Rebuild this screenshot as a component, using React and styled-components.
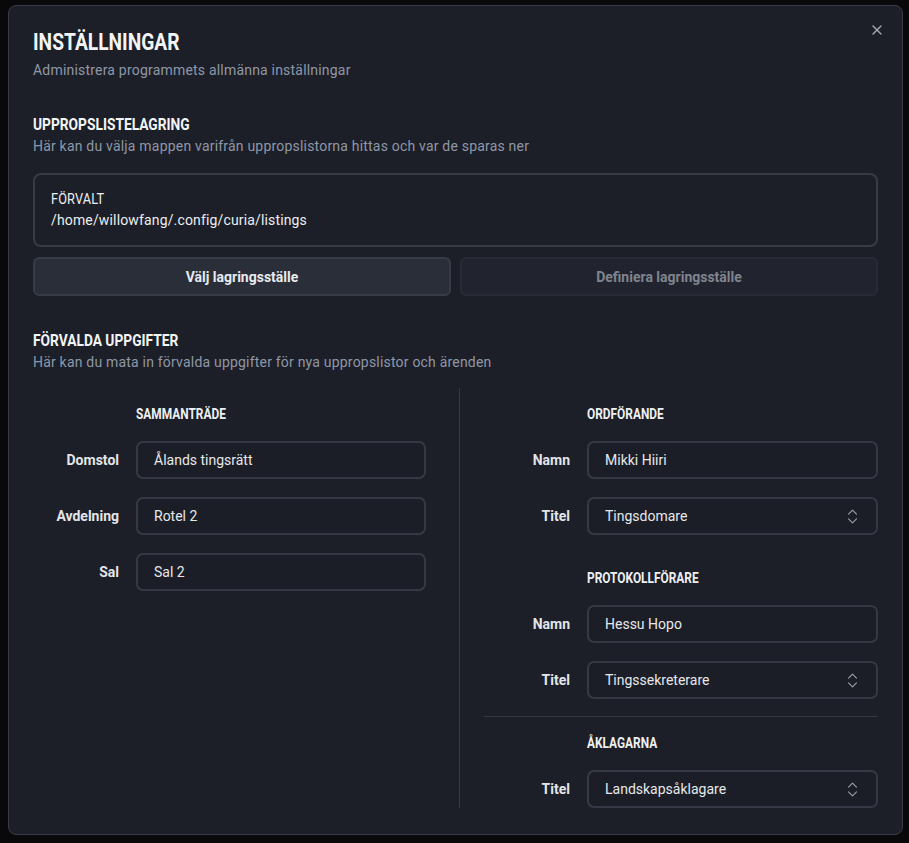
import React from "react";
import styled, { createGlobalStyle } from "styled-components";

const Global = createGlobalStyle`
  html, body {
    margin: 0;
    background: #09090b;
    height: 100%;
  }
  * { box-sizing: border-box; }
`;

const Backdrop = styled.div`
  padding: 5px 6px 8px 8px;
  font-family: Roboto, "Liberation Sans", sans-serif;
`;

const Dialog = styled.div`
  position: relative;
  background: #1c1f27;
  border: 1px solid #373c48;
  border-radius: 8px;
  padding: 20px 24px 26px 24px;
  height: 830px;
`;

const CloseBtn = styled.button`
  position: absolute;
  top: 12px;
  right: 13px;
  background: none;
  border: none;
  padding: 4px;
  color: #a3a7b1;
  display: flex;
  cursor: pointer;
`;

// narrow display face: condensed Roboto
const Narrow = styled.span`
  display: inline-block;
  transform: scaleX(${({ $k }) => $k});
  transform-origin: left center;
  white-space: nowrap;
`;

const Title = styled.h1`
  margin: 0;
  font-weight: 700;
  font-size: 24px;
  line-height: 32px;
  color: #f3f4f6;
`;

const Subtitle = styled.p`
  margin: ${({ $gap }) => $gap ?? 0}px 0 0;
  font-size: 14px;
  line-height: 20px;
  color: #8f97a8;
  letter-spacing: 0.2px;
`;

const Section = styled.section`
  margin-top: ${({ $top }) => $top}px;
`;

const SectionTitle = styled.h2`
  margin: 0;
  font-weight: 700;
  font-size: 16px;
  line-height: 22px;
  color: #f3f4f6;
`;

const PathBox = styled.div`
  margin-top: 17px;
  border: 2px solid #363b46;
  border-radius: 8px;
  padding: 14px 16px 14px;
  font-size: 14px;
  line-height: 21px;
  letter-spacing: 0.15px;
  color: #eceef2;
`;

const PathLabel = styled.div`
  font-size: 15px;
  line-height: 21px;
`;

const ButtonRow = styled.div`
  display: grid;
  grid-template-columns: 1fr 1fr;
  gap: 9px;
  margin-top: 10px;
`;

const Button = styled.button`
  height: 39px;
  border-radius: 6px;
  font-family: Roboto, "Liberation Sans", sans-serif;
  font-size: 14px;
  font-weight: 700;
  background: ${({ $disabled }) => ($disabled ? "#21242e" : "#2a2e39")};
  border: 2px solid ${({ $disabled }) => ($disabled ? "#272b35" : "#363b47")};
  color: ${({ $disabled }) => ($disabled ? "#80848f" : "#e8eaee")};
  cursor: pointer;
`;

const Columns = styled.div`
  display: grid;
  grid-template-columns: 427px 1fr;
  margin-top: 16px;
`;

const Column = styled.div`
  padding: ${({ $right }) => ($right ? "0 0 0 24px" : "0 33px 0 0")};
  border-right: ${({ $right }) => ($right ? "none" : "1px solid #333844")};
  display: flex;
  flex-direction: column;
`;

const Group = styled.div`
  display: grid;
  grid-template-columns: 86px 1fr;
  column-gap: 17px;
  row-gap: 18px;
  align-items: center;
  padding-top: ${({ $pt }) => $pt ?? 17}px;
`;

const GroupTitle = styled.div`
  grid-column: 2;
  font-weight: 700;
  font-size: 14px;
  line-height: 18px;
  color: #eef0f3;
`;

const Label = styled.label`
  text-align: right;
  font-size: 14px;
  font-weight: 700;
  color: #e3e5e9;
`;

const Field = styled.div`
  height: 38px;
  border: 2px solid #343945;
  border-radius: 7px;
  background: #1b1e26;
  display: flex;
  align-items: center;
  justify-content: space-between;
  padding: 0 14px 0 16px;
  font-size: 14px;
  color: #e6e8ec;
`;

const Divider = styled.hr`
  border: none;
  border-top: 1px solid #333844;
  margin: 17px 0 0;
`;

const Chevrons = () => (
  <svg width="19" height="19" viewBox="0 0 24 24" fill="none" stroke="#9ca0aa" strokeWidth="1.4" strokeLinecap="round" strokeLinejoin="round">
    <path d="m7 15 5 5 5-5" />
    <path d="m7 9 5-5 5 5" />
  </svg>
);

const Row = ({ label, value, select }) => (
  <>
    <Label>{label}</Label>
    <Field>
      <span>{value}</span>
      {select && <Chevrons />}
    </Field>
  </>
);

export default function App() {
  return (
    <>
      <Global />
      <Backdrop>
        <Dialog>
          <CloseBtn aria-label="Stäng">
            <svg width="16" height="16" viewBox="0 0 24 24" fill="none" stroke="currentColor" strokeWidth="2" strokeLinecap="round">
              <path d="M18 6 6 18" />
              <path d="m6 6 12 12" />
            </svg>
          </CloseBtn>

          <Title><Narrow $k={0.8}>INSTÄLLNINGAR</Narrow></Title>
          <Subtitle $gap={2}>Administrera programmets allmänna inställningar</Subtitle>

          <Section $top={34}>
            <SectionTitle><Narrow $k={0.86}>UPPROPSLISTELAGRING</Narrow></SectionTitle>
            <Subtitle>Här kan du välja mappen varifrån uppropslistorna hittas och var de sparas ner</Subtitle>
            <PathBox>
              <PathLabel><Narrow $k={0.85}>FÖRVALT</Narrow></PathLabel>
              <div>/home/willowfang/.config/curia/listings</div>
            </PathBox>
            <ButtonRow>
              <Button>Välj lagringsställe</Button>
              <Button $disabled>Definiera lagringsställe</Button>
            </ButtonRow>
          </Section>

          <Section $top={34}>
            <SectionTitle><Narrow $k={0.86}>FÖRVALDA UPPGIFTER</Narrow></SectionTitle>
            <Subtitle>Här kan du mata in förvalda uppgifter för nya uppropslistor och ärenden</Subtitle>
            <Columns>
              <Column>
                <Group>
                  <GroupTitle><Narrow $k={0.85}>SAMMANTRÄDE</Narrow></GroupTitle>
                  <Row label="Domstol" value="Ålands tingsrätt" />
                  <Row label="Avdelning" value="Rotel 2" />
                  <Row label="Sal" value="Sal 2" />
                </Group>
              </Column>
              <Column $right>
                <Group>
                  <GroupTitle><Narrow $k={0.85}>ORDFÖRANDE</Narrow></GroupTitle>
                  <Row label="Namn" value="Mikki Hiiri" />
                  <Row label="Titel" value="Tingsdomare" select />
                </Group>
                <Group $pt={34}>
                  <GroupTitle><Narrow $k={0.85}>PROTOKOLLFÖRARE</Narrow></GroupTitle>
                  <Row label="Namn" value="Hessu Hopo" />
                  <Row label="Titel" value="Tingssekreterare" select />
                </Group>
                <Divider />
                <Group>
                  <GroupTitle><Narrow $k={0.85}>ÅKLAGARNA</Narrow></GroupTitle>
                  <Row label="Titel" value="Landskapsåklagare" select />
                </Group>
              </Column>
            </Columns>
          </Section>
        </Dialog>
      </Backdrop>
    </>
  );
}
